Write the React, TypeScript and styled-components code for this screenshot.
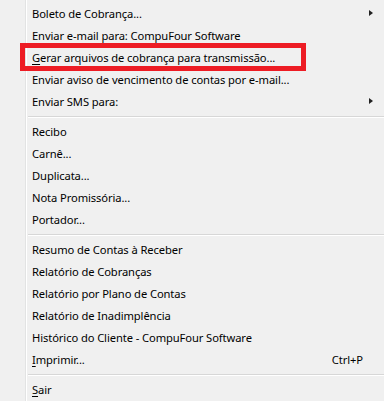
import React from "react";
import styled, { createGlobalStyle } from "styled-components";

const Global = createGlobalStyle`
  html, body { margin: 0; padding: 0; background: #f0f0f0; }
  body { font-family: "Noto Sans", "Open Sans", sans-serif; font-size: 11.2px; letter-spacing: -0.1px; color: #000; }
`;

const Menu = styled.div`
  display: grid;
  grid-template-columns: 26px 1fr;
  width: 384px;
  height: 401px;
  background: #f0f0f0;
  overflow: hidden;
`;

const Gutter = styled.div`
  border-right: 1px solid #e2e3e3;
  box-shadow: 1px 0 0 #ffffff;
`;

const Items = styled.div`
  display: flex;
  flex-direction: column;
  padding-top: 2px;
  margin-left: 2px;
`;

const Row = styled.div`
  position: relative;
  display: flex;
  align-items: center;
  height: 22px;
  padding-left: 4px;
  white-space: nowrap;
`;

const Label = styled.span`
  flex: 1;
`;

const Accel = styled.span`
  text-decoration: underline;
  text-underline-offset: 2px;
`;

const Shortcut = styled.span`
  margin-right: 21px;
`;

const Arrow = styled.span`
  width: 0;
  height: 0;
  border-top: 3.5px solid transparent;
  border-bottom: 3.5px solid transparent;
  border-left: 4px solid #222;
  margin-right: 11px;
  margin-top: -1px;
`;

const Separator = styled.div`
  height: 8px;
  display: flex;
  align-items: center;
  &::before {
    content: "";
    flex: 1;
    height: 1px;
    background: #d7d7d7;
    box-shadow: 0 1px 0 #ffffff;
  }
`;

const Highlight = styled.div`
  position: absolute;
  left: -8px;
  top: -3px;
  width: 286px;
  height: 28px;
  box-sizing: border-box;
  border: 5px solid #ed1c24;
  pointer-events: none;
`;

type Item =
  | { sep: true }
  | {
      sep?: false;
      label: string;
      accel?: number;
      shortcut?: string;
      submenu?: boolean;
      highlight?: boolean;
    };

const items: Item[] = [
  { label: "Boleto de Cobrança...", submenu: true },
  { label: "Enviar e-mail para: CompuFour Software" },
  { label: "Gerar arquivos de cobrança para transmissão...", accel: 0, highlight: true },
  { label: "Enviar aviso de vencimento de contas por e-mail..." },
  { label: "Enviar SMS para:", submenu: true },
  { sep: true },
  { label: "Recibo" },
  { label: "Carnê..." },
  { label: "Duplicata..." },
  { label: "Nota Promissória..." },
  { label: "Portador..." },
  { sep: true },
  { label: "Resumo de Contas à Receber" },
  { label: "Relatório de Cobranças" },
  { label: "Relatório por Plano de Contas" },
  { label: "Relatório de Inadimplência" },
  { label: "Histórico do Cliente - CompuFour Software" },
  { label: "Imprimir...", accel: 0, shortcut: "Ctrl+P" },
  { sep: true },
  { label: "Sair", accel: 0 },
];

function renderLabel(label: string, accel?: number) {
  if (accel === undefined) return label;
  return (
    <>
      {label.slice(0, accel)}
      <Accel>{label[accel]}</Accel>
      {label.slice(accel + 1)}
    </>
  );
}

export default function App() {
  return (
    <>
      <Global />
      <Menu>
        <Gutter />
        <Items>
          {items.map((it, i) =>
            it.sep ? (
              <Separator key={i} />
            ) : (
              <Row key={i}>
                <Label>{renderLabel(it.label, it.accel)}</Label>
                {it.shortcut && <Shortcut>{it.shortcut}</Shortcut>}
                {it.submenu && <Arrow />}
                {it.highlight && <Highlight />}
              </Row>
            )
          )}
        </Items>
      </Menu>
    </>
  );
}
